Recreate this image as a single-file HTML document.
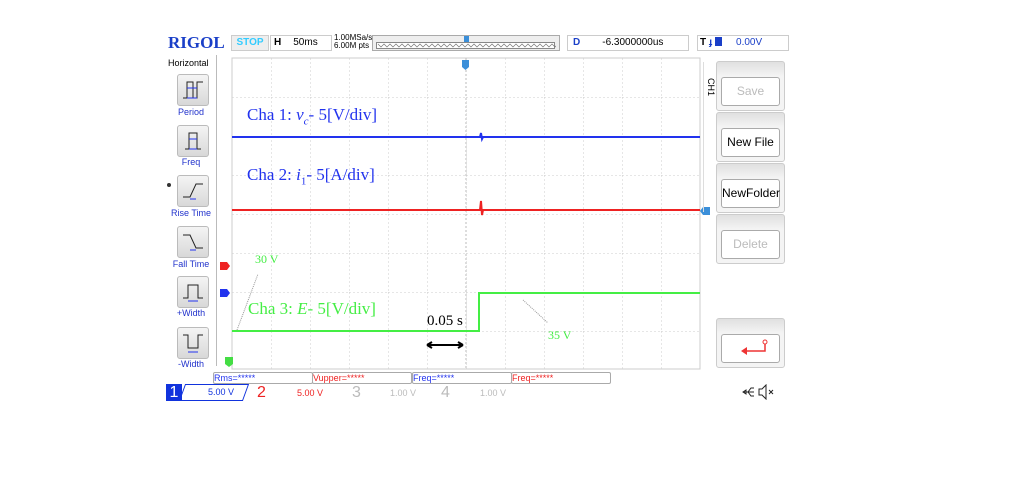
<!DOCTYPE html>
<html><head><meta charset="utf-8"><style>
body{margin:0;width:1012px;height:479px;background:#fff;position:relative;overflow:hidden;font-family:"Liberation Sans",sans-serif}
.a{position:absolute}
.btn{position:absolute;left:177px;width:30px;height:30px;border:1px solid #bbb;border-radius:3px;background:linear-gradient(#f4f4f4,#d8d8d8)}
.btn svg{position:absolute;left:3px;top:3px}
.lbl{position:absolute;left:166px;width:50px;text-align:center;font-size:9px;color:#2233cc}
.rb{position:absolute;left:716px;width:67px;height:48px;border:1px solid #ccc;border-radius:3px;background:linear-gradient(#e0e0e0,#f4f4f4 30%)}
.rb div{position:absolute;left:4px;top:15px;width:57px;height:27px;border:1px solid #aaa;border-radius:3px;background:#fff;font-size:12px;text-align:center;line-height:27px}
.ser{font-family:"Liberation Serif",serif;font-size:17px;position:absolute}
.meas{position:absolute;top:372px;height:10px;width:98px;border:1px solid #aaa;border-radius:2px;font-size:9px;line-height:10px}
</style></head><body>
<div class="a" style="left:168px;top:33px;font:bold 17px 'Liberation Serif',serif;color:#1a3fc8">RIGOL</div>
<div class="a" style="left:231px;top:35px;width:36px;height:14px;border:1px solid #ccc;background:#eee;color:#3cf;font-size:10px;font-weight:bold;text-align:center;line-height:14px">STOP</div>
<div class="a" style="left:270px;top:35px;width:60px;height:14px;border:1px solid #ccc;font-size:10px;line-height:14px"><b style="margin-left:3px">H</b><span style="margin-left:12px">50ms</span></div>
<div class="a" style="left:334px;top:34px;font-size:8px;line-height:8px">1.00MSa/s<br>6.00M pts</div>
<div class="a" style="left:372px;top:35px;width:186px;height:14px;border:1px solid #aaa;background:#eee"><svg class="a" style="left:3px;top:6px" width="180" height="8"><rect x="0.5" y="0.5" width="178" height="6" fill="#fff" stroke="#888"/><path d="M2 2l3 3 3-3 3 3 3-3 3 3 3-3 3 3 3-3 3 3 3-3 3 3 3-3 3 3 3-3 3 3 3-3 3 3 3-3 3 3 3-3 3 3 3-3 3 3 3-3 3 3 3-3 3 3 3-3 3 3 3-3 3 3 3-3 3 3 3-3 3 3 3-3 3 3 3-3 3 3 3-3 3 3 3-3 3 3 3-3 3 3 3-3 3 3 3-3 3 3 3-3 3 3 3-3 3 3 3-3 3 3 3-3 3 3 3-3 3 3 3-3 3 3" stroke="#777" stroke-width=".7" fill="none"/></svg><div style="position:absolute;left:91px;top:0;width:5px;height:6px;background:#3b8fd9"></div></div>
<div class="a" style="left:567px;top:35px;width:120px;height:14px;border:1px solid #ccc;font-size:10px;line-height:14px"><b style="color:#1a3fc8;margin-left:5px">D</b><span style="margin-left:22px">-6.3000000us</span></div>
<div class="a" style="left:697px;top:35px;width:90px;height:14px;border:1px solid #ccc;font-size:10px;line-height:14px"><b style="margin-left:2px">T</b> <span style="color:#1a3fc8;font-weight:bold">ɟ</span> <span style="display:inline-block;width:7px;height:9px;background:#1a3fc8;vertical-align:-1px"></span><span style="color:#1a3fc8;margin-left:14px">0.00V</span></div>
<div class="a" style="left:166px;top:55px;width:50px;height:311px;border-right:1px solid #bbb"></div>
<div class="a" style="left:168px;top:58px;font-size:9px">Horizontal</div>
<div class="btn" style="top:74px"><svg width="24" height="24"><path d="M2 20H6V4H12V20H16V4H22" stroke="#222" fill="none"/><path d="M6 10H12M16 10H12M6 20H16" stroke="#2233ee" fill="none"/></svg></div><div class="lbl" style="top:107px">Period</div>
<div class="btn" style="top:125px"><svg width="24" height="24"><path d="M4 20H8V4H16V20H20" stroke="#222" fill="none"/><path d="M8 10H16M8 20H16" stroke="#2233ee" fill="none"/></svg></div><div class="lbl" style="top:157px">Freq</div>
<div class="btn" style="top:175px"><svg width="24" height="24"><path d="M2 18H9L15 5H22" stroke="#222" fill="none"/><path d="M9 20H15" stroke="#2233ee" fill="none"/></svg></div><div class="lbl" style="top:208px">Rise Time</div>
<div class="btn" style="top:226px"><svg width="24" height="24"><path d="M2 5H9L15 18H22" stroke="#222" fill="none"/><path d="M9 20H15" stroke="#2233ee" fill="none"/></svg></div><div class="lbl" style="top:259px">Fall Time</div>
<div class="btn" style="top:276px"><svg width="24" height="24"><path d="M2 18H7V5H17V18H22" stroke="#222" fill="none"/><path d="M7 21H17" stroke="#2233ee" fill="none"/></svg></div><div class="lbl" style="top:308px">+Width</div>
<div class="btn" style="top:327px"><svg width="24" height="24"><path d="M2 4H7V17H17V4H22" stroke="#222" fill="none"/><path d="M7 21H17" stroke="#2233ee" fill="none"/></svg></div><div class="lbl" style="top:359px">-Width</div>
<div class="a" style="left:167px;top:183px;width:4px;height:4px;border-radius:2px;background:#333"></div>
<svg class="a" style="left:0;top:0" width="1012" height="479">
<defs><pattern id="g" x="232" y="58" width="39" height="39" patternUnits="userSpaceOnUse"><path d="M0 0V39M0 0H39" stroke="#ccc" stroke-width="1" stroke-dasharray="2 2" fill="none"/></pattern></defs>
<rect x="232" y="58" width="468" height="311" fill="url(#g)" stroke="#ccc"/>
<line x1="466" y1="58" x2="466" y2="369" stroke="#bbb" stroke-dasharray="2 2"/>
<path d="M232 137H480l1-4 1 6 1-2H700" stroke="#2233ee" stroke-width="2" fill="none"/>
<path d="M232 210H480l1-9 1 14 1-5H700" stroke="#ee2222" stroke-width="2" fill="none"/>
<path d="M232 331H479V293H700" stroke="#44ee44" stroke-width="2" fill="none"/>
<line x1="237" y1="330" x2="258" y2="274" stroke="#999" stroke-dasharray="1 1"/>
<line x1="523" y1="300" x2="548" y2="323" stroke="#999" stroke-dasharray="1 1"/>
<path d="M427 345H463M427 345l5-3M427 345l5 3M463 345l-5-3M463 345l-5 3" stroke="#000" stroke-width="2" fill="none"/>
<path d="M220 262h7l3 4-3 4h-7z" fill="#e22"/><path d="M220 289h7l3 4-3 4h-7z" fill="#2233ee"/>
<path d="M225 357h8v7l-4 3-4-3z" fill="#4d4"/>
<path d="M462 60h7v7l-3.5 3-3.5-3z" fill="#3b8fd9"/><path d="M703 207h7v8h-7l-3-4z" fill="#3b8fd9"/>
</svg>
<div class="ser" style="left:247px;top:105px;color:#2233ee">Cha 1: <i>v<sub style="font-size:11px">c</sub></i>- 5[V/div]</div>
<div class="ser" style="left:247px;top:165px;color:#2233ee">Cha 2: <i>i</i><sub style="font-size:11px">1</sub>- 5[A/div]</div>
<div class="ser" style="left:248px;top:299px;color:#44ee44">Cha 3: <i>E</i>- 5[V/div]</div>
<div class="ser" style="left:427px;top:313px;font-size:15px">0.05 s</div>
<div class="ser" style="left:255px;top:252px;font-size:12px;color:#44ee44">30 V</div>
<div class="ser" style="left:548px;top:328px;font-size:12px;color:#44ee44">35 V</div>
<div class="a" style="left:703px;top:62px;width:12px;height:150px;border-left:1px solid #ddd"></div>
<div class="a" style="left:702px;top:82px;font-size:9px;transform:rotate(90deg)">CH1</div>
<div class="rb" style="top:61px"><div style="color:#bbb">Save</div></div>
<div class="rb" style="top:112px"><div>New File</div></div>
<div class="rb" style="top:163px"><div>NewFolder</div></div>
<div class="rb" style="top:214px"><div style="color:#bbb">Delete</div></div>
<div class="rb" style="top:318px"><div><svg width="57" height="27"><path d="M43 8V16H24" stroke="#e33" stroke-width="1.5" fill="none"/><circle cx="43" cy="7" r="2" fill="#fff" stroke="#e33"/><path d="M19 16l6-4v8z" fill="#e33"/></svg></div></div>
<div class="meas" style="left:213px;color:#2233ee">Rms=*****</div>
<div class="meas" style="left:312px;color:#e22">Vupper=*****</div>
<div class="meas" style="left:412px;color:#2233ee">Freq=*****</div>
<div class="meas" style="left:511px;color:#e22">Freq=*****</div>
<div class="a" style="left:166px;top:384px;width:16px;height:17px;background:#1133dd;color:#fff;font-size:16px;line-height:17px;text-align:center">1</div>
<div class="a" style="left:182px;top:384px;width:62px;height:15px;border:1px solid #1133dd;font-size:9px;line-height:15px;color:#1133dd;transform:skewX(-20deg)"><span style="margin-left:25px;display:inline-block;transform:skewX(20deg)">5.00 V</span></div>
<div class="a" style="left:257px;top:384px;font-size:16px;color:#e22">2</div><div class="a" style="left:297px;top:388px;font-size:9px;color:#e22">5.00 V</div>
<div class="a" style="left:352px;top:384px;font-size:16px;color:#bbb">3</div><div class="a" style="left:390px;top:388px;font-size:9px;color:#bbb">1.00 V</div>
<div class="a" style="left:441px;top:384px;font-size:16px;color:#bbb">4</div><div class="a" style="left:480px;top:388px;font-size:9px;color:#bbb">1.00 V</div>
<svg class="a" style="left:740px;top:384px" width="40" height="16"><path d="M3 8H14M3 8l3-2v4zM8 8l3-4h3M8 8l3 4h3" stroke="#222" fill="none"/><path d="M19 5h3l4-4v14l-4-4h-3z" stroke="#222" fill="none"/><path d="M29 6l4 4M33 6l-4 4" stroke="#222"/></svg>
</body></html>
